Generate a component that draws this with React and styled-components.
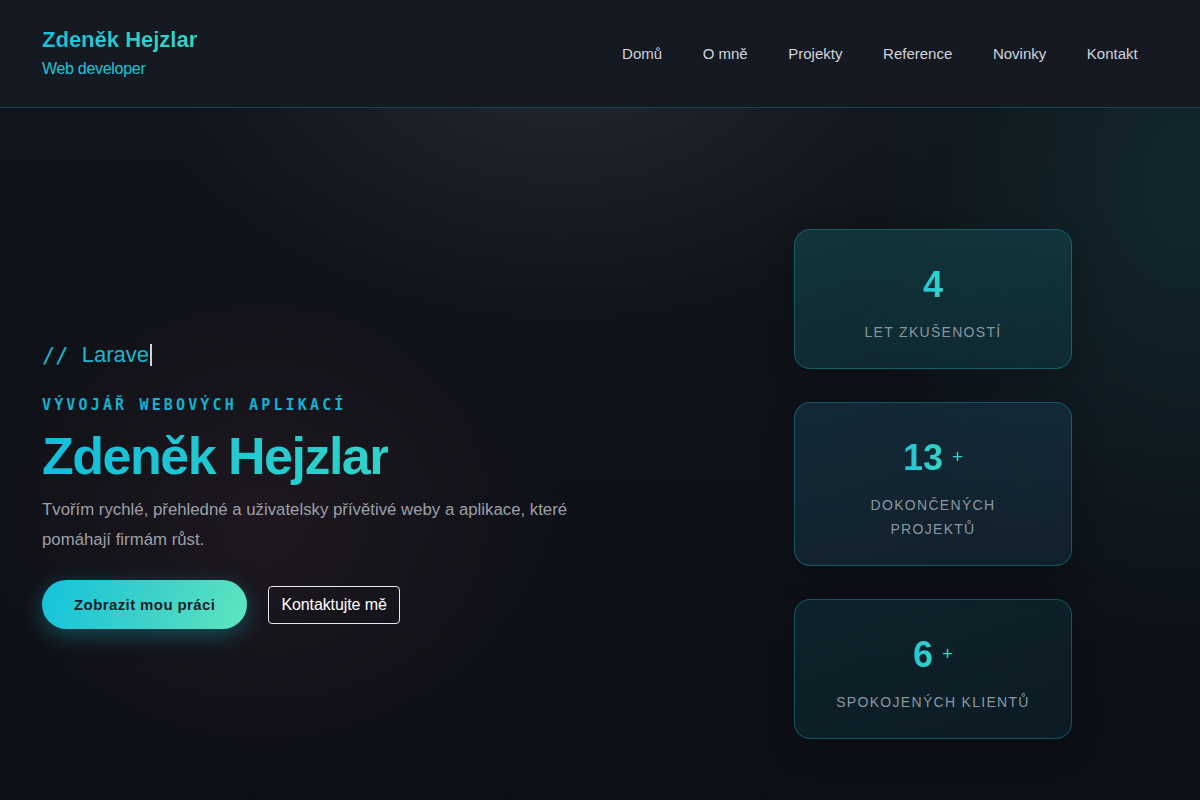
import React from 'react';
import styled, { createGlobalStyle } from 'styled-components';

// STYLES
const GlobalStyle = createGlobalStyle`
  * { box-sizing: border-box; }
  html, body {
    margin: 0;
    padding: 0;
    background: #0c0f15;
  }
  body {
    font-family: 'Liberation Sans', Arial, sans-serif;
    color: #e5e7eb;
  }
`;

const Page = styled.div`
  min-height: 800px;
  display: flex;
  flex-direction: column;
  background:
    radial-gradient(ellipse 420px 300px at 47% 4%, rgba(60, 64, 74, 0.45), transparent 100%),
    radial-gradient(ellipse 340px 460px at 99% 24%, rgba(18, 96, 100, 0.26), transparent 100%),
    radial-gradient(ellipse 300px 260px at 22% 66%, rgba(62, 36, 46, 0.35), transparent 100%),
    linear-gradient(180deg, #11141a 0%, #0c0f16 100%);
`;

const Header = styled.header`
  height: 108px;
  display: flex;
  align-items: center;
  justify-content: space-between;
  padding: 0 42px;
  background: #151922;
  border-bottom: 1px solid rgba(20, 160, 180, 0.35);
`;

const Brand = styled.div`
  display: flex;
  flex-direction: column;
  gap: 6px;
  margin-top: -1px;
`;

const BrandName = styled.div`
  font-size: 22px;
  font-weight: 700;
  line-height: 26px;
  background: linear-gradient(90deg, #16c0dc, #38d6c4);
  -webkit-background-clip: text;
  background-clip: text;
  color: transparent;
`;

const BrandSub = styled.div`
  font-size: 16px;
  line-height: 20px;
  letter-spacing: -0.3px;
  color: #22c3d6;
`;

const Nav = styled.nav`
  display: flex;
`;

const NavLink = styled.a`
  padding: 8px 20.3px;
  font-size: 15px;
  color: #d1d5db;
  text-decoration: none;
`;

const Hero = styled.main`
  flex: 1;
  display: grid;
  grid-template-columns: 1fr 278px;
  align-items: center;
  padding: 60px 128px 0 42px;
`;

const Intro = styled.section``;

const Typing = styled.div`
  display: flex;
  align-items: center;
  height: 30px;
  margin-top: 1px;
  font-size: 22px;
  color: #1cb6d0;
`;

const Slashes = styled.span`
  font-family: 'DejaVu Sans Mono', 'Liberation Mono', monospace;
  white-space: pre;
`;

const Cursor = styled.span`
  display: inline-block;
  width: 2px;
  height: 22px;
  margin-left: 1px;
  background: #d1d5db;
`;

const Eyebrow = styled.div`
  margin-top: 24px;
  font-family: 'DejaVu Sans Mono', 'Liberation Mono', monospace;
  font-size: 15px;
  font-weight: 700;
  line-height: 22px;
  letter-spacing: 3.15px;
  color: #10b2cf;
`;

const Title = styled.h1`
  margin: 12px 0 0;
  font-size: 52px;
  font-weight: 700;
  line-height: 57px;
  letter-spacing: -1.5px;
  background: linear-gradient(90deg, #12bedb 0%, #2fd3c8 100%);
  -webkit-background-clip: text;
  background-clip: text;
  color: transparent;
  width: fit-content;
`;

const Lead = styled.p`
  margin: 10px 0 0;
  max-width: 560px;
  font-size: 16.8px;
  line-height: 30px;
  color: #9ca0a8;
`;

const Actions = styled.div`
  display: flex;
  align-items: center;
  gap: 21px;
  margin-top: 25px;
`;

const PrimaryButton = styled.button`
  height: 49px;
  padding: 0 32px;
  border: none;
  border-radius: 999px;
  font-family: inherit;
  font-size: 15px;
  font-weight: 700;
  letter-spacing: 0.4px;
  color: #1a1f2b;
  background: linear-gradient(110deg, #13c3dd 0%, #3fd2c8 55%, #5ee6bd 100%);
  box-shadow: 0 6px 22px rgba(20, 190, 210, 0.35);
  cursor: pointer;
`;

const GhostButton = styled.button`
  height: 38px;
  padding: 0 12px;
  border: 1px solid #e5e7eb;
  border-radius: 4px;
  background: transparent;
  font-family: inherit;
  font-size: 16px;
  letter-spacing: -0.1px;
  color: #ffffff;
  cursor: pointer;
`;

const Stats = styled.aside`
  display: flex;
  flex-direction: column;
  gap: 33px;
`;

const StatCard = styled.div`
  padding: 36px 24px 24px;
  border: 1px solid rgba(22, 150, 170, 0.45);
  border-radius: 16px;
  text-align: center;
  background: ${(p) => p.$tint};
  box-shadow: 0 10px 30px rgba(0, 0, 0, 0.2);
`;

const StatValue = styled.div`
  display: flex;
  justify-content: center;
  align-items: center;
  height: 38px;
`;

const Number = styled.span`
  font-size: 36px;
  font-weight: 700;
  line-height: 38px;
  background: linear-gradient(90deg, #22c4d8, #33d6c8);
  -webkit-background-clip: text;
  background-clip: text;
  color: transparent;
`;

const Plus = styled.span`
  margin-left: 9px;
  font-size: 19px;
  color: #2dd4c8;
  transform: translateY(-1px);
`;

const StatLabel = styled.div`
  margin: 16px auto 0;
  max-width: 200px;
  font-size: 14px;
  line-height: 24px;
  letter-spacing: 1.3px;
  text-transform: uppercase;
  color: #8a97a2;
`;

const navItems = ['Domů', 'O mně', 'Projekty', 'Reference', 'Novinky', 'Kontakt'];

const stats = [
  { value: '4', plus: false, label: 'Let zkušeností', tint: 'linear-gradient(160deg, rgba(20,80,86,0.55), rgba(16,60,70,0.45))' },
  { value: '13', plus: true, label: 'Dokončených projektů', tint: 'linear-gradient(160deg, rgba(22,58,74,0.6), rgba(22,44,62,0.55))' },
  { value: '6', plus: true, label: 'Spokojených klientů', tint: 'linear-gradient(160deg, rgba(14,50,60,0.55), rgba(12,40,50,0.5))' },
];

// COMPONENT
const App = () => (
  <>
    <GlobalStyle />
    <Page>
      <Header>
        <Brand>
          <BrandName>Zdeněk Hejzlar</BrandName>
          <BrandSub>Web developer</BrandSub>
        </Brand>
        <Nav>
          {navItems.map((item) => (
            <NavLink key={item} href="#">
              {item}
            </NavLink>
          ))}
        </Nav>
      </Header>

      <Hero>
        <Intro>
          <Typing>
            <Slashes>{'// '}</Slashes>
            Larave
            <Cursor />
          </Typing>
          <Eyebrow>VÝVOJÁŘ WEBOVÝCH APLIKACÍ</Eyebrow>
          <Title>Zdeněk Hejzlar</Title>
          <Lead>
            Tvořím rychlé, přehledné a uživatelsky přívětivé weby a aplikace, které pomáhají firmám růst.
          </Lead>
          <Actions>
            <PrimaryButton type="button">Zobrazit mou práci</PrimaryButton>
            <GhostButton type="button">Kontaktujte mě</GhostButton>
          </Actions>
        </Intro>

        <Stats>
          {stats.map((s) => (
            <StatCard key={s.label} $tint={s.tint}>
              <StatValue>
                <Number>{s.value}</Number>
                {s.plus && <Plus>+</Plus>}
              </StatValue>
              <StatLabel>{s.label}</StatLabel>
            </StatCard>
          ))}
        </Stats>
      </Hero>
    </Page>
  </>
);

export default App;
